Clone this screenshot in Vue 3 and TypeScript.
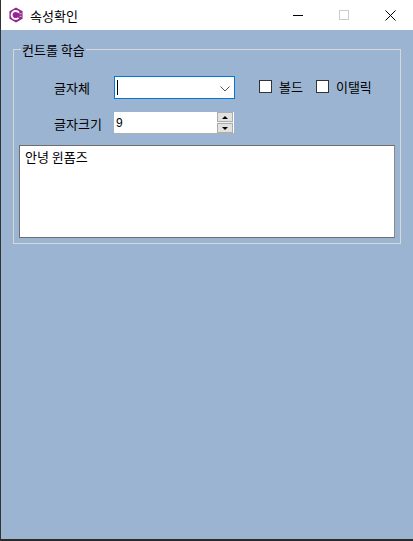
<script setup lang="ts">
const title = '속성확인';
const fontSize = 9;
const message = '안녕 윈폼즈';
</script>

<template>
  <div class="window">
    <header class="titlebar">
      <svg class="app-icon" width="14" height="16" viewBox="0 0 16 18">
        <path d="M8 .5 15.500 4.700v8.600L8 17.500.5 13.300V4.700Z" fill="#93278f" />
        <circle cx="7.600" cy="9" r="4.600" fill="none" stroke="#fff" stroke-width="2.200" stroke-dasharray="22 7" stroke-dashoffset="-3.500" />
        <path d="M12 7.500h2.500M12 10.500h2.500" stroke="#e6c8e6" stroke-width="1" />
      </svg>
      <span class="title">{{ title }}</span>
      <div class="caption-buttons">
        <span class="caption-btn">
          <svg width="11" height="11" viewBox="0 0 11 11"><path d="M0 5.500h10" stroke="#000" /></svg>
        </span>
        <span class="caption-btn">
          <svg width="11" height="11" viewBox="0 0 11 11"><rect x=".5" y=".5" width="9" height="9" fill="none" stroke="#ccc" /></svg>
        </span>
        <span class="caption-btn">
          <svg width="11" height="11" viewBox="0 0 11 11"><path d="M.5.5l10 10M10.500.5l-10 10" stroke="#000" /></svg>
        </span>
      </div>
    </header>

    <main class="client">
      <fieldset class="group">
        <legend>컨트롤 학습</legend>
        <div class="row font-row">
          <span class="field-label">글자체</span>
          <div class="combo">
            <span class="caret"></span>
            <svg class="chevron" width="10" height="6" viewBox="0 0 10 6"><path d="M.5.5 5 5 9.500.5" fill="none" stroke="#555" /></svg>
          </div>
          <label class="check first"><span class="box"></span>볼드</label>
          <label class="check"><span class="box"></span>이탤릭</label>
        </div>
        <div class="row size-row">
          <span class="field-label">글자크기</span>
          <div class="spinner">
            <span class="spin-value">{{ fontSize }}</span>
            <div class="spin-buttons">
              <span class="spin-btn"><i class="arrow up"></i></span>
              <span class="spin-btn"><i class="arrow down"></i></span>
            </div>
          </div>
        </div>
        <div class="memo">{{ message }}</div>
      </fieldset>
    </main>
  </div>
</template>

<style>
html,
body {
  margin: 0;
  overflow: hidden;
}
</style>

<style scoped>
.window {
  width: 413px;
  height: 541px;
  box-sizing: border-box;
  display: flex;
  flex-direction: column;
  border-left: 1px solid #333;
  border-bottom: 2px solid #2b2b2b;
  font-family: "Noto Sans CJK KR", "Liberation Sans", sans-serif;
  font-size: 13px;
  color: #000;
}

.titlebar {
  height: 30px;
  flex: none;
  display: flex;
  align-items: center;
  background: #fff;
  padding-left: 8px;
}

.app-icon {
  margin-right: 7px;
}

.title {
  font-size: 13px;
}

.caption-buttons {
  margin-left: auto;
  display: flex;
}

.caption-btn {
  width: 46px;
  height: 30px;
  display: flex;
  align-items: center;
  justify-content: center;
}

.client {
  flex: 1;
  background: #9bb4d1;
  padding: 11px 12px 0 12px;
}

.group {
  margin: 0;
  height: 203px;
  box-sizing: border-box;
  padding: 0 5px;
  border: 1px solid #d8d8d8;
  min-width: 0;
}

.group legend {
  margin-left: 2px;
  padding: 0 1px;
  line-height: 17px;
  font-size: 13px;
}

.row {
  display: flex;
  align-items: center;
}

.font-row {
  height: 23px;
  margin-top: 18px;
}

.size-row {
  height: 22px;
  margin-top: 13px;
}

.field-label {
  width: 60px;
  margin-left: 35px;
  flex: none;
  line-height: 17px;
}

.combo {
  width: 121px;
  height: 23px;
  box-sizing: border-box;
  border: 1px solid #0078d7;
  background: #fff;
  display: flex;
  align-items: center;
  justify-content: space-between;
  padding: 0 4px 0 2px;
}

.caret {
  width: 1px;
  height: 15px;
  background: #000;
}

.chevron {
  margin-top: 2px;
}

.check {
  display: flex;
  align-items: center;
  line-height: 17px;
  margin-top: -3px;
}

.check.first {
  margin-left: 24px;
  margin-right: 13px;
}

.box {
  width: 13px;
  height: 13px;
  box-sizing: border-box;
  border: 1px solid #333;
  background: #fff;
  margin-right: 7px;
}

.spinner {
  width: 120px;
  height: 22px;
  box-sizing: border-box;
  background: #fff;
  border-bottom: 1px solid #b0b0b0;
  display: flex;
  align-items: center;
  justify-content: space-between;
}

.spin-value {
  padding-left: 2px;
  font-family: "Liberation Sans", sans-serif;
  font-size: 12px;
}

.spin-buttons {
  width: 16px;
  height: 21px;
  display: flex;
  flex-direction: column;
  gap: 1px;
  margin-right: 1px;
  background: #f0f0f0;
}

.spin-btn {
  flex: 1;
  box-sizing: border-box;
  border: 1px solid #adadad;
  background: #e1e1e1;
  display: flex;
  align-items: center;
  justify-content: center;
}

.arrow {
  width: 0;
  height: 0;
  border-left: 3px solid transparent;
  border-right: 3px solid transparent;
}

.arrow.up {
  border-bottom: 3px solid #000;
}

.arrow.down {
  border-top: 3px solid #000;
}

.memo {
  margin-top: 11px;
  height: 93px;
  box-sizing: border-box;
  background: #fff;
  border: 1px solid #6d6d6d;
  border-right-color: #888;
  padding: 2px 5px;
  line-height: 17px;
}
</style>
